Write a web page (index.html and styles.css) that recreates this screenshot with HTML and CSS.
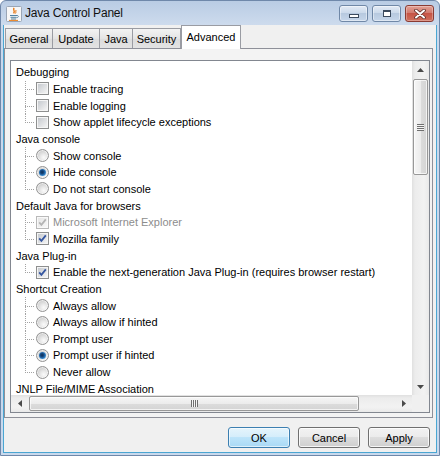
FILE: index.html
```html
<!DOCTYPE html>
<html>
<head>
<meta charset="utf-8">
<link rel="stylesheet" href="styles.css">
</head>
<body>
<div class="window">
  <div class="titlebar">
    <svg class="app-icon" width="16" height="16" viewBox="0 0 16 16">
      <rect x="0.5" y="0.5" width="15" height="15" rx="1" fill="#f7f7f7" stroke="#9aa6b6"/>
      <path d="M8.2 2 C6.2 3.8 9.8 4.6 7.6 7.4" fill="none" stroke="#e76f00" stroke-width="1.3"/>
      <path d="M10.4 4 C8.8 5 10.8 6 9.2 7.6" fill="none" stroke="#e76f00" stroke-width="1"/>
      <path d="M4 9.5 H11" stroke="#5382a1" stroke-width="1"/>
      <path d="M4.5 11.3 H10.5" stroke="#5382a1" stroke-width="1"/>
      <path d="M5 13 H10" stroke="#5382a1" stroke-width="1"/>
      <path d="M11 9.5 C13 9.5 13 11.5 10.5 11.8" fill="none" stroke="#5382a1" stroke-width="0.9"/>
      <path d="M3 14.4 H12" stroke="#e76f00" stroke-width="0.9"/>
    </svg>
    <span class="title">Java Control Panel</span>
    <div class="caption-buttons">
      <div class="cap"><span class="glyph-min"></span></div>
      <div class="cap"><span class="glyph-max"></span></div>
      <div class="cap close">
        <svg width="12" height="10" viewBox="0 0 12 10">
          <path d="M2 1.5 L10 8.5 M10 1.5 L2 8.5" stroke="#5b2b25" stroke-width="3.6" stroke-linecap="round"/>
          <path d="M2 1.5 L10 8.5 M10 1.5 L2 8.5" stroke="#ffffff" stroke-width="2" stroke-linecap="round"/>
        </svg>
      </div>
    </div>
  </div>
  <div class="client">
    <div class="tabs">
      <div class="tab w-general">General</div>
      <div class="tab w-update">Update</div>
      <div class="tab w-java">Java</div>
      <div class="tab w-security">Security</div>
      <div class="tab active w-advanced">Advanced</div>
    </div>
    <div class="panel">
      <div class="scrollpane">
        <div class="viewport">
          <div class="tree">
            <div class="node">Debugging</div>
            <div class="leaf"><span class="cb"></span>Enable tracing</div>
            <div class="leaf"><span class="cb"></span>Enable logging</div>
            <div class="leaf last"><span class="cb"></span>Show applet lifecycle exceptions</div>
            <div class="node">Java console</div>
            <div class="leaf"><span class="rb"></span>Show console</div>
            <div class="leaf"><span class="rb on"></span>Hide console</div>
            <div class="leaf last"><span class="rb"></span>Do not start console</div>
            <div class="node">Default Java for browsers</div>
            <div class="leaf disabled"><span class="cb dis"><svg class="check" width="13" height="13" viewBox="0 0 13 13"><path d="M3.2 6.4 L5.4 8.8 L9.8 3.4" fill="none" stroke="#b4b4b4" stroke-width="1.8"/></svg></span>Microsoft Internet Explorer</div>
            <div class="leaf last"><span class="cb"><svg class="check" width="13" height="13" viewBox="0 0 13 13"><path d="M3.2 6.4 L5.4 8.8 L9.8 3.4" fill="none" stroke="#3556a0" stroke-width="1.8"/></svg></span>Mozilla family</div>
            <div class="node">Java Plug-in</div>
            <div class="leaf last"><span class="cb"><svg class="check" width="13" height="13" viewBox="0 0 13 13"><path d="M3.2 6.4 L5.4 8.8 L9.8 3.4" fill="none" stroke="#3556a0" stroke-width="1.8"/></svg></span>Enable the next-generation Java Plug-in (requires browser restart)</div>
            <div class="node">Shortcut Creation</div>
            <div class="leaf"><span class="rb"></span>Always allow</div>
            <div class="leaf"><span class="rb"></span>Always allow if hinted</div>
            <div class="leaf"><span class="rb"></span>Prompt user</div>
            <div class="leaf"><span class="rb on"></span>Prompt user if hinted</div>
            <div class="leaf last"><span class="rb"></span>Never allow</div>
            <div class="node">JNLP File/MIME Association</div>
          </div>
        </div>
        <div class="vscroll">
          <div class="sb-btn"><svg width="7" height="4" viewBox="0 0 7 4"><path d="M0 4 L3.5 0 L7 4 Z" fill="#4a4a4a"/></svg></div>
          <div class="vthumb"><span class="grip-v"></span></div>
          <div class="sb-fill"></div>
          <div class="sb-btn"><svg width="7" height="4" viewBox="0 0 7 4"><path d="M0 0 L3.5 4 L7 0 Z" fill="#4a4a4a"/></svg></div>
        </div>
        <div class="hscroll">
          <div class="sb-btn"><svg width="4" height="7" viewBox="0 0 4 7"><path d="M4 0 L0 3.5 L4 7 Z" fill="#4a4a4a"/></svg></div>
          <div class="hthumb"><span class="grip-h"></span></div>
          <div class="sb-fill"></div>
          <div class="sb-btn"><svg width="4" height="7" viewBox="0 0 4 7"><path d="M0 0 L4 3.5 L0 7 Z" fill="#4a4a4a"/></svg></div>
        </div>
        <div class="corner"></div>
      </div>
    </div>
    <div class="buttons">
      <div class="btn default">OK</div>
      <div class="btn">Cancel</div>
      <div class="btn">Apply</div>
    </div>
  </div>
</div>
</body>
</html>
```

FILE: styles.css
```css
html, body {
  margin: 0;
  padding: 0;
}
body {
  width: 440px;
  height: 456px;
  overflow: hidden;
  font-family: "Liberation Sans", Arial, sans-serif;
  font-size: 11px;
  color: #000;
}
.window {
  width: 440px;
  height: 456px;
  box-sizing: border-box;
  border: 1px solid #6f88aa;
  border-radius: 6px 6px 0 0;
  background: linear-gradient(to bottom, #b9cce4 0, #cddbed 24px, #c9d9ed 24px, #c9d9ed 100%);
  padding: 0 2px 2px 2px;
  display: flex;
  flex-direction: column;
}
.titlebar {
  height: 24px;
  display: flex;
  align-items: center;
  padding-left: 3px;
  padding-right: 3px;
  flex-shrink: 0;
}
.app-icon {
  display: block;
  margin-top: 1px;
}
.title {
  margin-left: 3px;
  font-size: 12px;
  letter-spacing: -0.2px;
  color: #111;
}
.caption-buttons {
  margin-left: auto;
  align-self: flex-start;
  margin-top: 4px;
  display: flex;
  gap: 4px;
}
.cap {
  width: 29px;
  height: 17px;
  box-sizing: border-box;
  border: 1px solid #7088a7;
  border-radius: 3px;
  background: linear-gradient(to bottom, #e3ebf5 0, #ccdaeb 45%, #b7c9df 50%, #c6d6ea 100%);
  box-shadow: inset 0 0 0 1px rgba(255,255,255,0.45);
  display: flex;
  align-items: center;
  justify-content: center;
}
.cap.close {
  border-color: #8a3b33;
  background: linear-gradient(to bottom, #e2a094 0, #d27b6f 45%, #c65445 50%, #d0705d 100%);
  box-shadow: inset 0 0 0 1px rgba(255,255,255,0.3);
}
.cap.close svg {
  display: block;
}
.glyph-min {
  width: 8px;
  height: 2px;
  border: 1px solid #3b4a5e;
  background: #fff;
  margin-top: 5px;
}
.glyph-max {
  width: 6px;
  height: 4px;
  border: 1px solid #3b4a5e;
  border-top-width: 2px;
  background: #fff;
  box-shadow: inset 0 0 0 1px #ffffff;
}
.client {
  flex: 1;
  background: #f0f0f0;
  border: 1px solid #4aa6d2;
  border-top: none;
  display: flex;
  flex-direction: column;
}
.tabs {
  height: 23px;
  display: flex;
  align-items: flex-end;
  padding-left: 1px;
  flex-shrink: 0;
}
.tab {
  height: 20px;
  box-sizing: border-box;
  border: 1px solid #9a9ca3;
  border-bottom: none;
  background: linear-gradient(to bottom, #f3f3f3, #e4e4e4 50%, #dcdcdc 51%, #e3e3e3);
  display: flex;
  align-items: center;
  justify-content: center;
  padding-top: 1px;
}
.tab + .tab {
  border-left: none;
}
.tab.active {
  height: 24px;
  margin-bottom: -1px;
  position: relative;
  z-index: 1;
  background: #ffffff;
  border-left: 1px solid #9a9ca3;
  padding-top: 0;
  padding-bottom: 2px;
}
.w-general { width: 48px; }
.w-update { width: 47px; }
.w-java { width: 33px; }
.w-security { width: 48px; }
.w-advanced { width: 60px; margin-left: 0; }
.panel {
  height: 370px;
  box-sizing: border-box;
  border: 1px solid #8e9099;
  margin-right: 3px;
  background: #f3f3f3;
  padding: 11px 2px 4px 5px;
  flex-shrink: 0;
}
.scrollpane {
  width: 420px;
  height: 353px;
  box-sizing: border-box;
  border: 1px solid #828790;
  display: grid;
  grid-template-columns: 401px 17px;
  grid-template-rows: 334px 17px;
  background: #fff;
}
.viewport {
  overflow: hidden;
  background: #fff;
}
.tree {
  padding: 3px 0 0 5px;
}
.node, .leaf {
  height: calc(50px / 3);
  display: flex;
  align-items: center;
  white-space: nowrap;
}
.leaf {
  position: relative;
  padding-left: 20px;
}
.leaf.disabled {
  color: #8d8d8d;
}
.leaf::before {
  content: "";
  position: absolute;
  left: 9px;
  top: 0;
  bottom: 0;
  width: 1px;
  background: repeating-linear-gradient(to bottom, #a3a3a3 0, #a3a3a3 1px, transparent 1px, transparent 2px);
}
.leaf.last::before {
  bottom: 50%;
}
.leaf::after {
  content: "";
  position: absolute;
  left: 9px;
  top: 50%;
  width: 10px;
  height: 1px;
  background: repeating-linear-gradient(to right, #a3a3a3 0, #a3a3a3 1px, transparent 1px, transparent 2px);
}
.cb {
  position: relative;
  width: 13px;
  height: 13px;
  box-sizing: border-box;
  border: 1px solid #8e8f8f;
  padding: 1px;
  margin-right: 4px;
  flex-shrink: 0;
  background: linear-gradient(135deg, #c6cacf 0, #e2e3e5 60%, #f4f4f4 100%) content-box, #f5f5f5;
}
.cb.dis {
  border-color: #b9b9b9;
  background: linear-gradient(135deg, #e6e6e6, #f7f7f7) content-box, #f9f9f9;
}
.check {
  position: absolute;
  left: -1px;
  top: -1px;
}
.rb {
  position: relative;
  width: 13px;
  height: 13px;
  box-sizing: border-box;
  border-radius: 50%;
  border: 1px solid #939393;
  margin-right: 4px;
  flex-shrink: 0;
  background: radial-gradient(circle at 62% 68%, #fbfbfb 0, #eaeaea 30%, #cfcfcf 70%, #c4c4c4 100%);
  box-shadow: inset 0 0 0 1px rgba(255,255,255,0.6);
}
.rb.on::after {
  content: "";
  position: absolute;
  left: 2px;
  top: 2px;
  width: 7px;
  height: 7px;
  border-radius: 50%;
  background: radial-gradient(circle at 45% 45%, #0f2f55 0, #16467c 30%, #2f7fc5 60%, #9cd0f2 100%);
}
.vscroll {
  display: flex;
  flex-direction: column;
  background: linear-gradient(to right, #e0e0e0 0, #ececec 3px, #f2f2f2 12px, #e9e9e9 100%);
}
.hscroll {
  display: flex;
  flex-direction: row;
  background: linear-gradient(to bottom, #e0e0e0 0, #ececec 3px, #f2f2f2 12px, #e9e9e9 100%);
}
.sb-btn {
  width: 17px;
  height: 17px;
  flex-shrink: 0;
  display: flex;
  align-items: center;
  justify-content: center;
}
.sb-btn svg {
  display: block;
}
.sb-fill {
  flex: 1;
}
.vthumb {
  margin: 1px 1px 0 1px;
  height: 96px;
  box-sizing: border-box;
  border: 1px solid #989898;
  border-radius: 2px;
  background: linear-gradient(to right, #f6f6f6 0, #ececec 50%, #dcdcdc 51%, #d4d4d4 100%);
  box-shadow: inset 0 0 0 1px rgba(255,255,255,0.7);
  display: flex;
  align-items: center;
  justify-content: center;
}
.grip-v {
  width: 7px;
  height: 7px;
  background: repeating-linear-gradient(to bottom, #6f6f6f 0, #6f6f6f 1px, #f5f5f5 1px, #f5f5f5 2px);
}
.hthumb {
  margin: 1px 0 1px 1px;
  width: 330px;
  box-sizing: border-box;
  border: 1px solid #989898;
  border-radius: 2px;
  background: linear-gradient(to bottom, #f6f6f6 0, #ececec 50%, #dcdcdc 51%, #d4d4d4 100%);
  box-shadow: inset 0 0 0 1px rgba(255,255,255,0.7);
  display: flex;
  align-items: center;
  justify-content: center;
}
.grip-h {
  width: 7px;
  height: 7px;
  background: repeating-linear-gradient(to right, #6f6f6f 0, #6f6f6f 1px, #f5f5f5 1px, #f5f5f5 2px);
}
.corner {
  background: #f0f0f0;
}
.buttons {
  flex: 1;
  display: flex;
  justify-content: flex-end;
  align-items: flex-start;
  gap: 8px;
  padding: 9px 6px 0 0;
}
.btn {
  width: 62px;
  height: 21px;
  box-sizing: border-box;
  border: 1px solid #707070;
  border-radius: 3px;
  background: linear-gradient(to bottom, #f2f2f2 0, #ebebeb 50%, #dddddd 50%, #cfcfcf 100%);
  box-shadow: inset 0 0 0 1px rgba(255,255,255,0.8);
  display: flex;
  align-items: center;
  justify-content: center;
}
.btn.default {
  border-color: #3c7fb1;
  background: linear-gradient(to bottom, #e5f4fc 0, #d4edfb 50%, #bde4fa 50%, #a9d9f5 100%);
  box-shadow: inset 0 0 0 1px rgba(255,255,255,0.6);
}
```
